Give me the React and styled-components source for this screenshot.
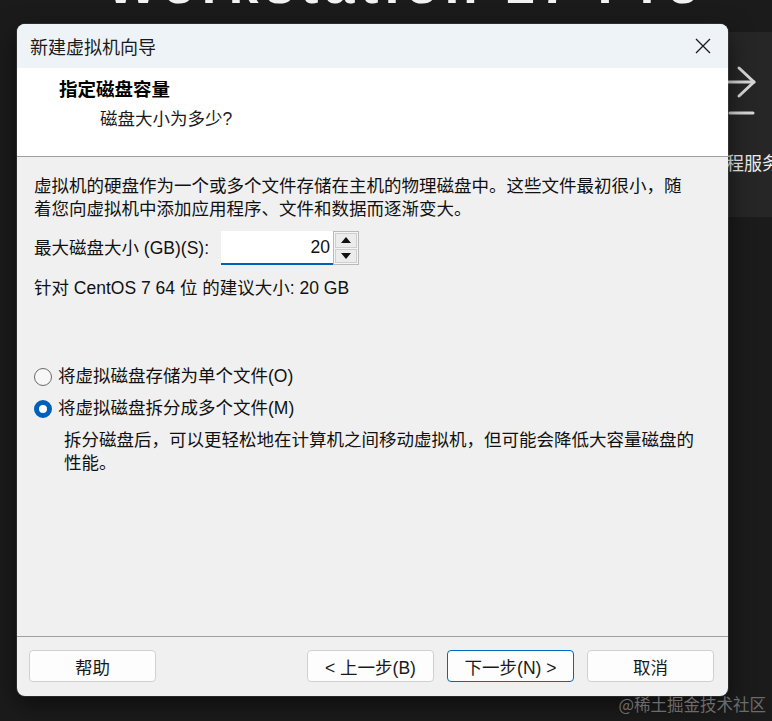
import React from "react";
import styled, { createGlobalStyle } from "styled-components";

const FONT = `"Liberation Sans", "Noto Sans CJK SC", sans-serif`;

const Global = createGlobalStyle`
  html, body { margin: 0; padding: 0; background: #1b1b1b; }
  body { font-family: ${FONT}; }
  #root { width: 772px; height: 721px; }
`;

const Desktop = styled.div`
  position: relative;
  width: 772px;
  height: 721px;
  overflow: hidden;
  background: #1b1b1b;
`;

const BackApp = styled.div`
  display: flex;
  flex-direction: column;
  height: 100%;
`;

const HeadingClip = styled.div`
  height: 5px;
  flex: none;
  overflow: hidden;
  padding-left: 40px;
`;

const Heading = styled.div`
  font: 700 54px/54px "Liberation Sans", sans-serif;
  color: #f2f2f2;
  white-space: nowrap;
  letter-spacing: 6px;
  text-align: center;
  margin-top: -43px;
`;

const SideRow = styled.div`
  display: flex;
  justify-content: flex-end;
  margin-top: 27px;
`;

const SidePanel = styled.div`
  width: 72px;
  height: 185px;
  background: #262626;
  padding-left: 8px;
  box-sizing: border-box;
  display: flex;
  flex-direction: column;
  overflow: hidden;
`;

const SideIcon = styled.svg`
  margin: 32px 0 0 20px;
  display: block;
`;

const SideText = styled.div`
  margin-top: 32px;
  font-size: 18px;
  line-height: 20px;
  color: #ececec;
  white-space: nowrap;
  font-family: "Noto Sans CJK SC", sans-serif;
`;

const Dialog = styled.div`
  position: absolute;
  left: 17px;
  top: 24px;
  width: 711px;
  height: 672px;
  border-radius: 8px;
  overflow: hidden;
  background: #f0f0f0;
  box-shadow: 0 0 0 1px rgba(255, 255, 255, 0.1), 0 8px 24px rgba(0, 0, 0, 0.55);
  display: flex;
  flex-direction: column;
  font-family: ${FONT};
  color: #000;
`;

const TitleBar = styled.div`
  height: 44px;
  flex: none;
  background: #eef3f8;
  display: flex;
  align-items: center;
  justify-content: space-between;
  padding: 0 9px 0 13px;
  font-size: 18px;
  color: #1a1a1a;
`;

const CloseButton = styled.div`
  width: 32px;
  height: 32px;
  display: flex;
  align-items: center;
  justify-content: center;
`;

const Header = styled.div`
  height: 89px;
  flex: none;
  box-sizing: border-box;
  background: #fff;
  border-bottom: 1px solid #a0a0a0;
  padding: 10px 0 0 42px;
`;

const HeaderTitle = styled.div`
  font-size: 18.5px;
  font-weight: 700;
  line-height: 24px;
`;

const HeaderSub = styled.div`
  font-size: 17.5px;
  line-height: 24px;
  margin-top: 5px;
  padding-left: 41px;
  color: #1a1a1a;
`;

const Body = styled.div`
  flex: 1;
  padding: 18px 0 0 17px;
  display: flex;
  flex-direction: column;
  align-items: flex-start;
  font-size: 17.5px;
  line-height: 23px;
  color: #111;
`;

const Paragraph = styled.p`
  margin: 0;
  max-width: 690px;
`;

const InputRow = styled.div`
  margin-top: 10px;
  height: 34px;
  display: flex;
  align-items: center;
  gap: 12px;
`;

const NumberField = styled.div`
  display: flex;
  height: 34px;
`;

const NumberBox = styled.div`
  width: 112px;
  height: 34px;
  box-sizing: border-box;
  background: #fff;
  border-bottom: 2px solid #005fb8;
  display: flex;
  align-items: center;
  justify-content: flex-end;
  padding: 0 3px 0 0;
  font-size: 17.5px;
`;

const Spinner = styled.div`
  width: 26px;
  height: 34px;
  box-sizing: border-box;
  border: 1px solid #b9b9b9;
  display: flex;
  flex-direction: column;
  gap: 1px;
  padding: 1px;
  background: #f5f5f5;
`;

const SpinButton = styled.div`
  flex: 1;
  border: 1px solid #cfcfcf;
  background: #ececec;
  display: flex;
  align-items: center;
  justify-content: center;
`;

const Recommend = styled.div`
  margin-top: 12px;
`;

const RadioGroup = styled.div`
  margin-top: 65px;
  display: flex;
  flex-direction: column;
  gap: 9px;
`;

const RadioRow = styled.div`
  display: flex;
  align-items: center;
  gap: 6px;
  height: 23px;
`;

const RadioCircle = styled.span`
  width: 18px;
  height: 18px;
  box-sizing: border-box;
  border-radius: 50%;
  flex: none;
  border: ${(p) => (p.$checked ? "5px solid #005fb8" : "1px solid #6a6a6a")};
  background: ${(p) => (p.$checked ? "#fff" : "#f7f7f7")};
`;

const Description = styled.p`
  margin: 0;
  padding-left: 30px;
  max-width: 640px;
`;

const Footer = styled.div`
  height: 60px;
  flex: none;
  box-sizing: border-box;
  border-top: 1px solid #a0a0a0;
  display: flex;
  align-items: flex-start;
  padding: 13px 14px 0 12px;
`;

const ButtonGroup = styled.div`
  margin-left: auto;
  display: flex;
  gap: 13px;
`;

const Button = styled.div`
  width: 127px;
  height: 32px;
  box-sizing: border-box;
  border: 1px solid ${(p) => (p.$primary ? "#0067c0" : "#d0d0d0")};
  border-radius: 4px;
  background: #fdfdfd;
  display: flex;
  align-items: center;
  justify-content: center;
  font-size: 17.5px;
  color: #1a1a1a;
`;

const Watermark = styled.div`
  position: absolute;
  right: 6px;
  bottom: 7px;
  font-family: "Noto Sans CJK SC", sans-serif;
  font-size: 16.5px;
  line-height: 20px;
  color: #6b6b6b;
  white-space: nowrap;
`;

const Triangle = ({ up }) => (
  <svg width="10" height="6" viewBox="0 0 10 6">
    <path d={up ? "M0 6 L5 0 L10 6 Z" : "M0 0 L5 6 L10 0 Z"} fill="#111" />
  </svg>
);

export default function App() {
  return (
    <Desktop>
      <Global />
      <BackApp>
        <HeadingClip>
          <Heading>Workstation 17 Pro</Heading>
        </HeadingClip>
        <SideRow>
          <SidePanel>
            <SideIcon width="40" height="56" viewBox="0 0 40 56">
              <g stroke="#d6d6d6" strokeWidth="3" fill="none" strokeLinecap="round" strokeLinejoin="round">
                <path d="M0 18 H26" />
                <path d="M11 4 L26 18 L11 32" />
                <path d="M2 49 H25" />
              </g>
            </SideIcon>
            <SideText>远程服务</SideText>
          </SidePanel>
        </SideRow>
      </BackApp>

      <Dialog>
        <TitleBar>
          <span>新建虚拟机向导</span>
          <CloseButton>
            <svg width="16" height="16" viewBox="0 0 16 16">
              <path d="M1 1 L15 15 M15 1 L1 15" stroke="#1a1a1a" strokeWidth="1.3" />
            </svg>
          </CloseButton>
        </TitleBar>
        <Header>
          <HeaderTitle>指定磁盘容量</HeaderTitle>
          <HeaderSub>磁盘大小为多少?</HeaderSub>
        </Header>
        <Body>
          <Paragraph>
            虚拟机的硬盘作为一个或多个文件存储在主机的物理磁盘中。这些文件最初很小，随
            <br />
            着您向虚拟机中添加应用程序、文件和数据而逐渐变大。
          </Paragraph>
          <InputRow>
            <span>最大磁盘大小 (GB)(S):</span>
            <NumberField>
              <NumberBox>20</NumberBox>
              <Spinner>
                <SpinButton>
                  <Triangle up />
                </SpinButton>
                <SpinButton>
                  <Triangle />
                </SpinButton>
              </Spinner>
            </NumberField>
          </InputRow>
          <Recommend>针对 CentOS 7 64 位 的建议大小: 20 GB</Recommend>
          <RadioGroup>
            <RadioRow>
              <RadioCircle />
              <span>将虚拟磁盘存储为单个文件(O)</span>
            </RadioRow>
            <RadioRow>
              <RadioCircle $checked />
              <span>将虚拟磁盘拆分成多个文件(M)</span>
            </RadioRow>
            <Description>
              拆分磁盘后，可以更轻松地在计算机之间移动虚拟机，但可能会降低大容量磁盘的
              <br />
              性能。
            </Description>
          </RadioGroup>
        </Body>
        <Footer>
          <Button>帮助</Button>
          <ButtonGroup>
            <Button>&lt; 上一步(B)</Button>
            <Button $primary>下一步(N) &gt;</Button>
            <Button>取消</Button>
          </ButtonGroup>
        </Footer>
      </Dialog>
      <Watermark>@稀土掘金技术社区</Watermark>
    </Desktop>
  );
}
